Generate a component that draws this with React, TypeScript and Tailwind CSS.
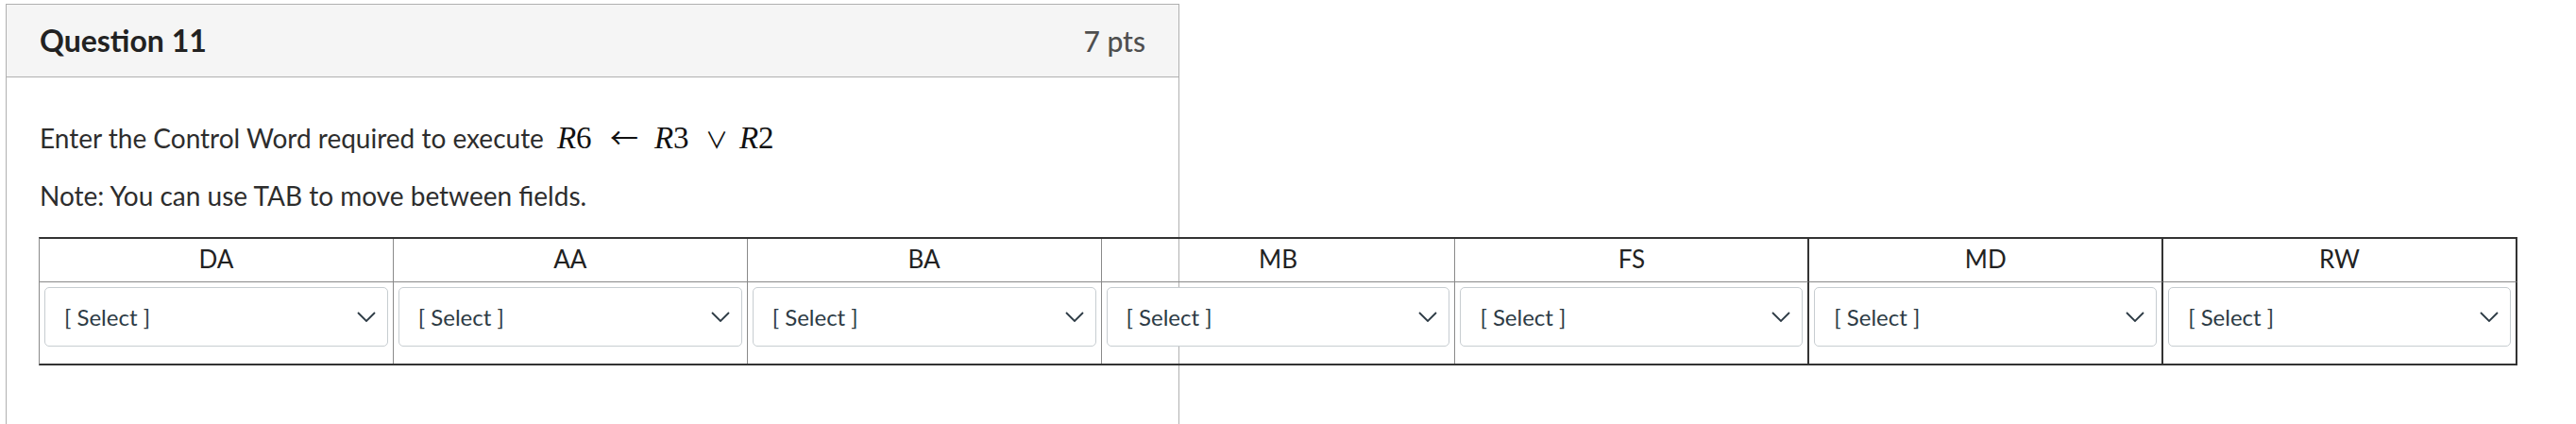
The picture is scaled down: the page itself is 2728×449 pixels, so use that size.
import React from 'react'

const fields = ['DA', 'AA', 'BA', 'MB', 'FS', 'MD', 'RW']

// right border of each column: FS, MD and RW get the dark rule
const colBorder = [
    'border-r border-r-[#8a8a8a]',
    'border-r border-r-[#8a8a8a]',
    'border-r border-r-[#8a8a8a]',
    'border-r border-r-[#8a8a8a]',
    'border-r-2 border-r-[#333]',
    'border-r-2 border-r-[#333]',
    'border-r-2 border-r-[#333]',
]

const Chevron = () => (
    <svg width="20" height="11" viewBox="0 0 20 11" fill="none" className="shrink-0">
        <polyline points="1,1 10,10 19,1" stroke="#2d3b45" strokeWidth="1.8" strokeLinejoin="miter" />
    </svg>
)

const SelectBox = () => (
    <div className="h-[63px] w-full flex items-center justify-between bg-white border border-[#c7cdd1] rounded-[5px] pl-[20px] pr-[12px]">
        <span className="text-[24px] text-[#2d3b45]">[ Select ]</span>
        <Chevron />
    </div>
)

const MathExpr = () => (
    <span className="inline-flex items-baseline ml-[14px] text-[33px] leading-[30px] text-[#111] font-['Liberation_Serif','DejaVu_Serif',serif]">
        <span className="w-[39px] whitespace-nowrap"><i>R</i>6</span>
        <span className="ml-[17px] w-[30px] text-[30px] font-['Noto_Sans_CJK_JP','DejaVu_Serif',serif]">←</span>
        <span className="ml-[17px] w-[38px] whitespace-nowrap"><i>R</i>3</span>
        <span className="ml-[16px] w-[22px] text-[24px] font-['Noto_Sans_CJK_JP','DejaVu_Serif',serif]">∨</span>
        <span className="ml-[14px] w-[35px] whitespace-nowrap"><i>R</i>2</span>
    </span>
)

export default function App() {
    return (
        <div className="min-h-[449px] bg-white pl-[6px] pt-[4px] font-['Lato','Liberation_Sans',sans-serif] text-[#2d2d2d]">
            <div className="w-[1243px] border border-[#b0b0b0]">
                {/* Header */}
                <div className="h-[77px] flex items-center justify-between px-[35px] bg-[#f5f5f5] border-b border-[#b0b0b0]">
                    <span className="text-[32px] font-bold text-[#222]">Question 11</span>
                    <span className="text-[30px] font-medium text-[#4f4f4f]">7 pts</span>
                </div>

                {/* Body */}
                <div className="pl-[35px] pt-[43px] pb-[80px]">
                    <p className="text-[28px] leading-[42px] whitespace-nowrap">
                        Enter the Control Word required to execute
                        <MathExpr />
                    </p>
                    <p className="mt-[19px] text-[28px] leading-[42px] whitespace-nowrap">
                        Note: You can use TAB to move between fields.
                    </p>

                    <div className="mt-[23px] -ml-px w-[2625px] grid grid-cols-7 border-y-2 border-y-[#333] border-l border-l-[#8a8a8a]">
                        {fields.map((f, i) => (
                            <div key={f} className={`h-[46px] flex items-center justify-center border-b border-b-[#8a8a8a] text-[26px] text-[#222] pb-[2px] ${colBorder[i]}`}>
                                {f}
                            </div>
                        ))}
                        {fields.map((f, i) => (
                            <div key={f + '-sel'} className={`h-[86px] px-[5px] pt-[5px] ${colBorder[i]}`}>
                                <SelectBox />
                            </div>
                        ))}
                    </div>
                </div>
            </div>
        </div>
    )
}
